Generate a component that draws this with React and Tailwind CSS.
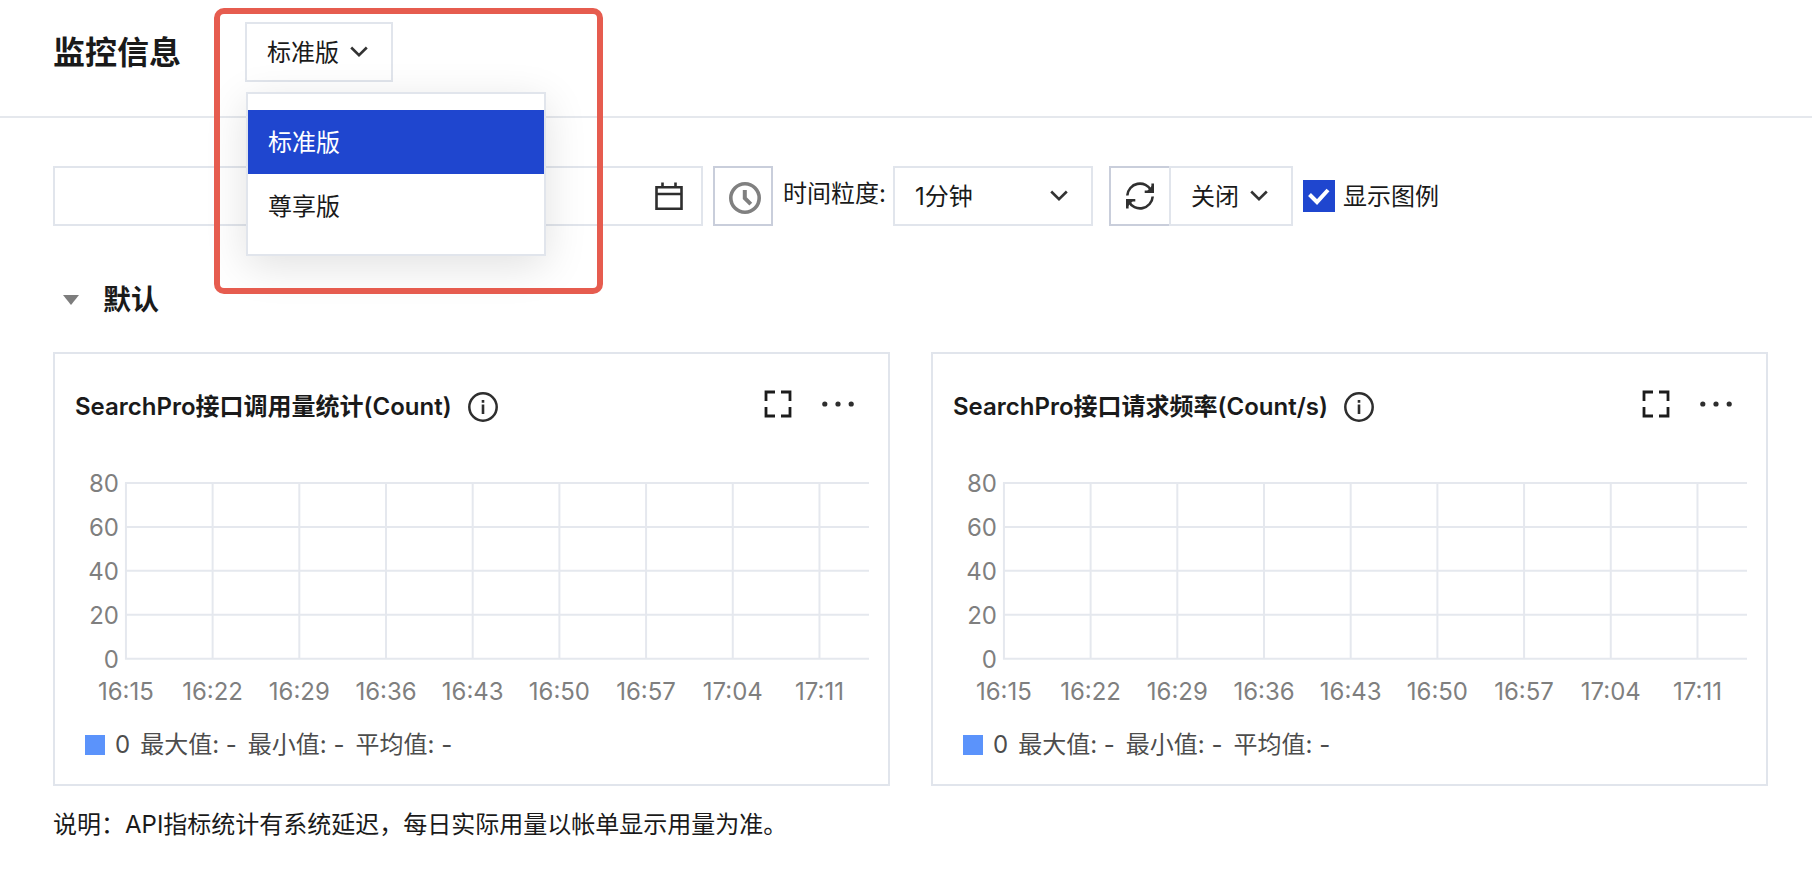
import { useState } from "react";

const EDITIONS = ["标准版", "尊享版"];
const X_LABELS = ["16:15", "16:22", "16:29", "16:36", "16:43", "16:50", "16:57", "17:04", "17:11"];
const Y_LABELS = [80, 60, 40, 20, 0];
const CHARTS = [
  { id: "volume", title: "SearchPro接口调用量统计(Count)" },
  { id: "rate", title: "SearchPro接口请求频率(Count/s)" },
];

function Chevron({ className }) {
  return (
    <svg className={className} width="18" height="12" viewBox="0 0 18 12" fill="none" stroke="#333" strokeWidth="2.6" aria-hidden="true">
      <path d="M1.200 1.500 9 9.200l7.800-7.700" />
    </svg>
  );
}

function CalendarIcon() {
  return (
    <svg width="28" height="30" viewBox="0 0 28 30" fill="none" stroke="#2e2e2e" strokeWidth="2.6" aria-hidden="true">
      <path d="M1.500 6.200h25v21.600h-25zM1.500 13h25M7.500 1.500v5M20.500 1.500v5" />
    </svg>
  );
}

function ClockIcon() {
  return (
    <svg width="32" height="32" viewBox="0 0 32 32" fill="none" stroke="#808080" aria-hidden="true">
      <circle cx="16" cy="16" r="14.200" strokeWidth="3.6" />
      <path d="M15.800 8v8.200l6 6" strokeWidth="4" />
    </svg>
  );
}

function RefreshIcon() {
  return (
    <svg width="28" height="28" viewBox="0 0 28 28" fill="none" stroke="#303030" strokeWidth="2.6" aria-hidden="true">
      <path d="M1.300 13.500A12.700 12.700 0 0 1 25.300 8.600" />
      <path d="M26.700 14.500A12.700 12.700 0 0 1 2.700 19.400" />
      <path d="M26.700 1.500v8.300h-8" />
      <path d="M1.300 26.500v-8.300h8" />
      <path d="M26.700 3v7h-6.500zM1.300 25v-7h6.500z" fill="#303030" stroke="none" />
    </svg>
  );
}

function InfoIcon() {
  return (
    <svg width="30" height="30" viewBox="0 0 30 30" fill="none" stroke="#2e2e2e" aria-hidden="true">
      <circle cx="15" cy="15" r="13.700" strokeWidth="2.5" />
      <path d="M15 12.500v9.500M15 8v2.800" strokeWidth="2.6" />
    </svg>
  );
}

function ExpandIcon() {
  return (
    <svg width="28" height="28" viewBox="0 0 28 28" fill="none" stroke="#1c1c1c" strokeWidth="2.8" aria-hidden="true">
      <path d="M2 11V2h9M17 2h9v9M26 17v9h-9M11 26H2v-9" />
    </svg>
  );
}

function MoreIcon() {
  return (
    <svg width="32" height="6" viewBox="0 0 32 6" fill="#2e2e2e" aria-hidden="true">
      <circle cx="2.800" cy="3" r="2.600" />
      <circle cx="16" cy="3" r="2.600" />
      <circle cx="29.200" cy="3" r="2.600" />
    </svg>
  );
}

function EmptyChart({ title }) {
  return (
    <svg className="block w-full text-2xl" viewBox="0 0 834 248" role="img" aria-label={title}>
      {Y_LABELS.map((v, i) => (
        <g key={v}>
          <path d={`M70 ${21 + i * 44}H815`} stroke="#e5e8ee" strokeWidth="2" />
          <text x="64" y={30 + i * 44} textAnchor="end" fill="#7f7f7f">{v}</text>
        </g>
      ))}
      {X_LABELS.map((t, i) => (
        <g key={t}>
          <path d={`M${71 + i * 86.8} 21V197`} stroke="#e5e8ee" strokeWidth="2" />
          <text x={71 + i * 86.8} y="238" textAnchor="middle" fill="#7f7f7f">{t}</text>
        </g>
      ))}
    </svg>
  );
}

function ChartCard({ title, showLegend }) {
  return (
    <section className="min-w-0 border-2 border-[#e1e5ec] pb-[21px]">
      <div className="flex items-center justify-between pt-[35px] pr-[34px] pl-5">
        <div className="flex items-center gap-4">
          <h3 className="text-2xl font-semibold leading-9">{title}</h3>
          <button type="button" aria-label="指标说明"><InfoIcon /></button>
        </div>
        <div className="flex items-center gap-[30px] pb-1.5">
          <button type="button" aria-label="全屏"><ExpandIcon /></button>
          <button type="button" aria-label="更多"><MoreIcon /></button>
        </div>
      </div>
      <div className="pt-[37px]">
        <EmptyChart title={title} />
      </div>
      {showLegend && (
        <div className="flex items-center pt-[17px] pl-[30px] text-2xl leading-9 text-[#4d4d4d]">
          <span className="mr-2.5 size-5 bg-[#5b93fb]" />
          <span className="mr-2.5">0</span>
          <span className="flex gap-[11px]">
            <span>最大值: -</span>
            <span>最小值: -</span>
            <span>平均值: -</span>
          </span>
        </div>
      )}
    </section>
  );
}

export default function App() {
  const [edition, setEdition] = useState("标准版");
  const [open, setOpen] = useState(true);
  const [legend, setLegend] = useState(true);
  const [expanded, setExpanded] = useState(true);

  return (
    <div className="min-h-screen bg-white font-['Inter','Noto_Sans_CJK_SC',sans-serif] text-2xl text-[#1a1a1a]">
      <header className="relative flex items-start border-b-2 border-[#e5e8ed] pt-[22px] pb-[33px] pl-[53px]">
        <h1 className="w-48 pt-px text-[32px] font-semibold leading-[60px]">监控信息</h1>
        <div className="relative z-10">
          <button
            type="button"
            aria-haspopup="listbox"
            aria-expanded={open}
            onClick={() => setOpen(!open)}
            className="flex h-15 items-center gap-[11px] border-2 border-[#e1e5ec] bg-white pr-[23px] pl-5"
          >
            <span className="pt-0.5">{edition}</span>
            <Chevron />
          </button>
          {open && (
            <ul role="listbox" aria-label="版本" className="absolute top-[70px] left-px w-[300px] border-2 border-[#e1e5ec] bg-white py-4 shadow-[0_10px_40px_rgba(0,0,0,0.12)]">
              {EDITIONS.map((name) => (
                <li key={name} role="option" aria-selected={name === edition}>
                  <button
                    type="button"
                    onClick={() => setEdition(name)}
                    className={`block h-16 w-full px-5 pt-0.5 text-left ${name === edition ? "bg-[#1f46cf] text-white" : "bg-white"}`}
                  >
                    {name}
                  </button>
                </li>
              ))}
            </ul>
          )}
        </div>
        <div className="pointer-events-none absolute top-2 left-[214px] z-20 h-[286px] w-[389px] rounded-[10px] border-6 border-[#e65c4f]" />
      </header>

      <main className="pt-12 pr-11 pl-[53px]">
        <div className="flex flex-wrap items-center">
          <div className="mr-2.5 flex h-15 w-[650px] items-center border-2 border-[#e1e5ec] pr-[18px]">
            <input type="text" aria-label="时间范围" className="h-full min-w-0 flex-1 px-5 outline-none" />
            <button type="button" aria-label="选择日期"><CalendarIcon /></button>
          </div>
          <button type="button" aria-label="快捷时间" className="mr-2.5 flex size-15 items-center justify-center border-2 border-[#c9cedb] pt-1 pl-1">
            <ClockIcon />
          </button>
          <label htmlFor="granularity" className="mr-[7px] pb-1">时间粒度:</label>
          <div className="relative mr-4 w-[200px]">
            <select id="granularity" className="h-15 w-full appearance-none border-2 border-[#e1e5ec] bg-white px-5 pt-0.5 outline-none">
              <option>1分钟</option>
              <option>5分钟</option>
            </select>
            <Chevron className="pointer-events-none absolute top-6 right-[25px]" />
          </div>
          <div className="mr-2.5 flex">
            <button type="button" aria-label="刷新" className="flex h-15 w-15 items-center justify-center border-2 border-r-0 border-[#c9cedb]">
              <RefreshIcon />
            </button>
            <div className="relative w-[124px]">
              <select aria-label="自动刷新" className="h-15 w-full appearance-none border-2 border-[#e1e5ec] bg-white px-5 pt-0.5 outline-none">
                <option>关闭</option>
                <option>开启</option>
              </select>
              <Chevron className="pointer-events-none absolute top-6 right-[25px]" />
            </div>
          </div>
          <label className="flex items-center gap-2">
            <span className="relative size-8">
              <input
                type="checkbox"
                checked={legend}
                onChange={(e) => setLegend(e.target.checked)}
                className="block size-8 appearance-none border-2 border-[#c9cedb] checked:border-[#1f46cf] checked:bg-[#1f46cf]"
              />
              <svg className="pointer-events-none absolute inset-0" width="32" height="32" viewBox="0 0 32 32" fill="none" stroke="#fff" strokeWidth="4" aria-hidden="true">
                <path d="M6.500 14.500l7.500 7.500L25 10" />
              </svg>
            </span>
            <span className="pt-0.5">显示图例</span>
          </label>
        </div>

        <h2 className="pt-[53px] pb-[31px] text-[28px] font-semibold">
          <button type="button" aria-expanded={expanded} onClick={() => setExpanded(!expanded)} className="flex items-center gap-6 pl-2.5 leading-[42px]">
            <svg width="16" height="10" viewBox="0 0 16 10" fill="#7d7d7d" aria-hidden="true"><path d="M0 0h16L8 10z" /></svg>
            默认
          </button>
        </h2>

        {expanded && (
          <div className="grid grid-cols-2 gap-[41px]">
            {CHARTS.map((c) => (
              <ChartCard key={c.id} title={c.title} showLegend={legend} />
            ))}
          </div>
        )}

        <p className="pt-[21px] leading-9">说明：API指标统计有系统延迟，每日实际用量以帐单显示用量为准。</p>
      </main>
    </div>
  );
}
